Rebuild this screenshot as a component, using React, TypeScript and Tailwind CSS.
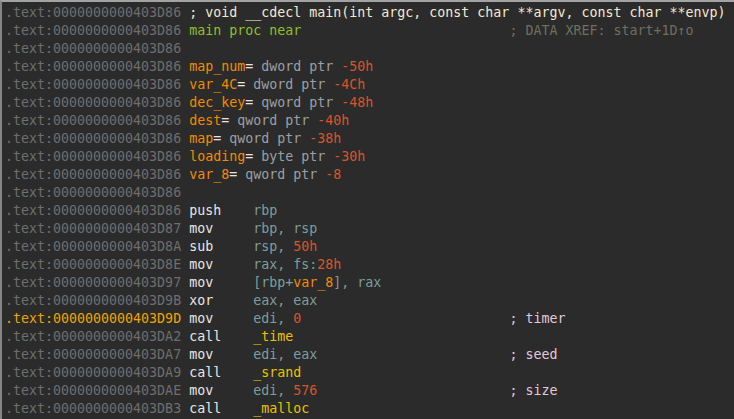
import React from 'react'

type Seg = [string, string]

// colour classes for the listing
const ADDR = 'text-[#6e6e6e]'
const HI = 'text-[#f0a400]'
const MN = 'text-[#e6e6e6]'
const REG = 'text-[#7c9e9c]'
const NUM = 'text-[#d9542e]'
const NAME = 'text-[#f08c00]'
const TYPE = 'text-[#9aa0a6]'
const FUNC = 'text-[#e8c400]'
const CMT = 'text-[#e2c8dc]'

const pad = (s: string, n: number) => s + ' '.repeat(Math.max(0, n - s.length))

const lines: { addr: string; hi?: boolean; segs: Seg[] }[] = [
  {
    addr: '0000000000403D86',
    segs: [['; void __cdecl main(int argc, const char **argv, const char **envp)', 'text-[#f2ead0]']],
  },
  {
    addr: '0000000000403D86',
    segs: [
      [pad('main proc near', 40), 'text-[#8fc026]'],
      ['; DATA XREF: start+1D\u2191o', 'text-[#6f6f60]'],
    ],
  },
  { addr: '0000000000403D86', segs: [] },
  { addr: '0000000000403D86', segs: [['map_num', NAME], ['= ', MN], ['dword ptr ', TYPE], ['-50h', NUM]] },
  { addr: '0000000000403D86', segs: [['var_4C', NAME], ['= ', MN], ['dword ptr ', TYPE], ['-4Ch', NUM]] },
  { addr: '0000000000403D86', segs: [['dec_key', NAME], ['= ', MN], ['qword ptr ', TYPE], ['-48h', NUM]] },
  { addr: '0000000000403D86', segs: [['dest', NAME], ['= ', MN], ['qword ptr ', TYPE], ['-40h', NUM]] },
  { addr: '0000000000403D86', segs: [['map', NAME], ['= ', MN], ['qword ptr ', TYPE], ['-38h', NUM]] },
  { addr: '0000000000403D86', segs: [['loading', NAME], ['= ', MN], ['byte ptr ', TYPE], ['-30h', NUM]] },
  { addr: '0000000000403D86', segs: [['var_8', NAME], ['= ', MN], ['qword ptr ', TYPE], ['-8', NUM]] },
  { addr: '0000000000403D86', segs: [] },
  { addr: '0000000000403D86', segs: [[pad('push', 8), MN], ['rbp', REG]] },
  { addr: '0000000000403D87', segs: [[pad('mov', 8), MN], ['rbp, rsp', REG]] },
  { addr: '0000000000403D8A', segs: [[pad('sub', 8), MN], ['rsp, ', REG], ['50h', NUM]] },
  { addr: '0000000000403D8E', segs: [[pad('mov', 8), MN], ['rax, fs:', REG], ['28h', NUM]] },
  { addr: '0000000000403D97', segs: [[pad('mov', 8), MN], ['[rbp+', REG], ['var_8', NAME], ['], rax', REG]] },
  { addr: '0000000000403D9B', segs: [[pad('xor', 8), MN], ['eax, eax', REG]] },
  {
    addr: '0000000000403D9D',
    hi: true,
    segs: [[pad('mov', 8), MN], ['edi, ', REG], [pad('0', 27), NUM], ['; timer', CMT]],
  },
  { addr: '0000000000403DA2', segs: [[pad('call', 8), MN], ['_time', FUNC]] },
  { addr: '0000000000403DA7', segs: [[pad('mov', 8), MN], [pad('edi, eax', 32), REG], ['; seed', CMT]] },
  { addr: '0000000000403DA9', segs: [[pad('call', 8), MN], ['_srand', FUNC]] },
  { addr: '0000000000403DAE', segs: [[pad('mov', 8), MN], ['edi, ', REG], [pad('576', 27), NUM], ['; size', CMT]] },
  { addr: '0000000000403DB3', segs: [[pad('call', 8), MN], ['_malloc', FUNC]] },
]

export default function App() {
  return (
    <div className="w-[734px] h-[419px] overflow-hidden bg-[#2b2b2b] border-t-2 border-l-2 border-t-[#a3a3a3] border-l-[#858585]">
      <div className="pt-[2px] pl-[3px] font-['DejaVu_Sans_Mono',monospace] text-[13.3px] leading-[18px] whitespace-pre">
        {lines.map((l, i) => (
          <div key={i} className="h-[18px]">
            <span className={l.hi ? HI : ADDR}>.text:{l.addr} </span>
            {l.segs.map(([t, c], j) => (
              <span key={j} className={c}>
                {t}
              </span>
            ))}
          </div>
        ))}
      </div>
    </div>
  )
}
